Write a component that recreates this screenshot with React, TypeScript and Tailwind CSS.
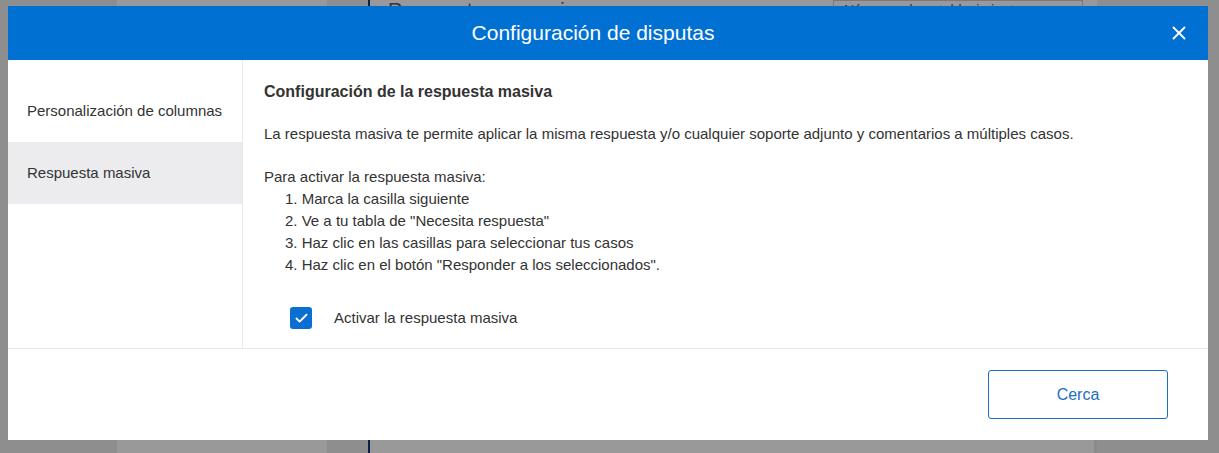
import React from 'react';
import { X, ChevronDown, Check } from 'lucide-react';

const steps = [
  'Marca la casilla siguiente',
  'Ve a tu tabla de "Necesita respuesta"',
  'Haz clic en las casillas para seleccionar tus casos',
  'Haz clic en el botón "Responder a los seleccionados".',
];

const navItems = ['Personalización de columnas', 'Respuesta masiva'];

const App: React.FC = () => {
  return (
    <div
      className="relative h-[453px] w-full overflow-hidden bg-[#8e8e8e]"
      style={{ fontFamily: '"Liberation Sans", Arial, sans-serif' }}
    >
      {/* page behind the overlay */}
      <div className="flex h-full">
        <div className="w-[117px] shrink-0" />
        <div className="w-[210px] shrink-0 bg-[#999999]" />
        <div className="w-[41px] shrink-0" />
        <div className="flex w-[729px] shrink-0 flex-col border-l-2 border-[#0b1f4a] bg-[#999999]">
          <div className="flex h-[20px] items-end justify-between">
            <span className="pl-[18px] text-[20px] leading-none text-[#333]">Respuesta necesaria</span>
            <div className="mr-[14px] flex h-[20px] w-[250px] items-center gap-2 border border-[#7a7a7a] px-[10px] text-[14px] text-[#333]">
              Números de establecimientos <ChevronDown size={16} />
            </div>
          </div>
          <div className="flex-1 border-r-[3px] border-[#8a8a8a]" />
        </div>
      </div>

      {/* modal */}
      <div className="absolute left-[8px] top-[6px] flex h-[434px] w-[1200px] flex-col bg-white">
        <div className="relative flex h-[54px] shrink-0 items-center justify-center bg-[#0070d2] pr-[30px]">
          <h1 className="text-[21px] text-white">Configuración de disputas</h1>
          <X size={22} strokeWidth={2} className="absolute right-[18px] text-white" />
        </div>

        <div className="flex h-[289px] shrink-0 border-b border-[#e8e8e8]">
          <aside className="w-[235px] shrink-0 border-r border-[#e8e8e8] pt-[20px]">
            {navItems.map((item, i) => (
              <div
                key={item}
                className={`flex h-[62px] items-center pl-[19px] text-[15px] text-[#333] ${
                  i === 1 ? 'bg-[#ececee]' : ''
                }`}
              >
                {item}
              </div>
            ))}
          </aside>

          <section className="flex-1 pl-[21px] pt-[21px] text-[15px] leading-[22px] text-[#333]">
            <h2 className="text-[16px] font-bold">Configuración de la respuesta masiva</h2>
            <p className="mt-[20px]">
              La respuesta masiva te permite aplicar la misma respuesta y/o cualquier soporte adjunto y comentarios a múltiples casos.
            </p>
            <p className="mt-[21px]">Para activar la respuesta masiva:</p>
            <ol className="pl-[21px]">
              {steps.map((s, i) => (
                <li key={i}>
                  {i + 1}. {s}
                </li>
              ))}
            </ol>
            <label className="mt-[31px] flex items-center gap-[22px] pl-[26px]">
              <span className="flex h-[22px] w-[22px] items-center justify-center rounded-[3px] bg-[#0a6fd1]">
                <Check size={15} strokeWidth={3} className="text-white" />
              </span>
              <span>Activar la respuesta masiva</span>
            </label>
          </section>
        </div>

        <div className="flex flex-1 items-start justify-end pr-[40px] pt-[21px]">
          <button className="h-[49px] w-[180px] rounded-[3px] border border-[#1d6ebf] text-[16px] text-[#1d6ebf]">
            Cerca
          </button>
        </div>
      </div>
    </div>
  );
};

export default App;
